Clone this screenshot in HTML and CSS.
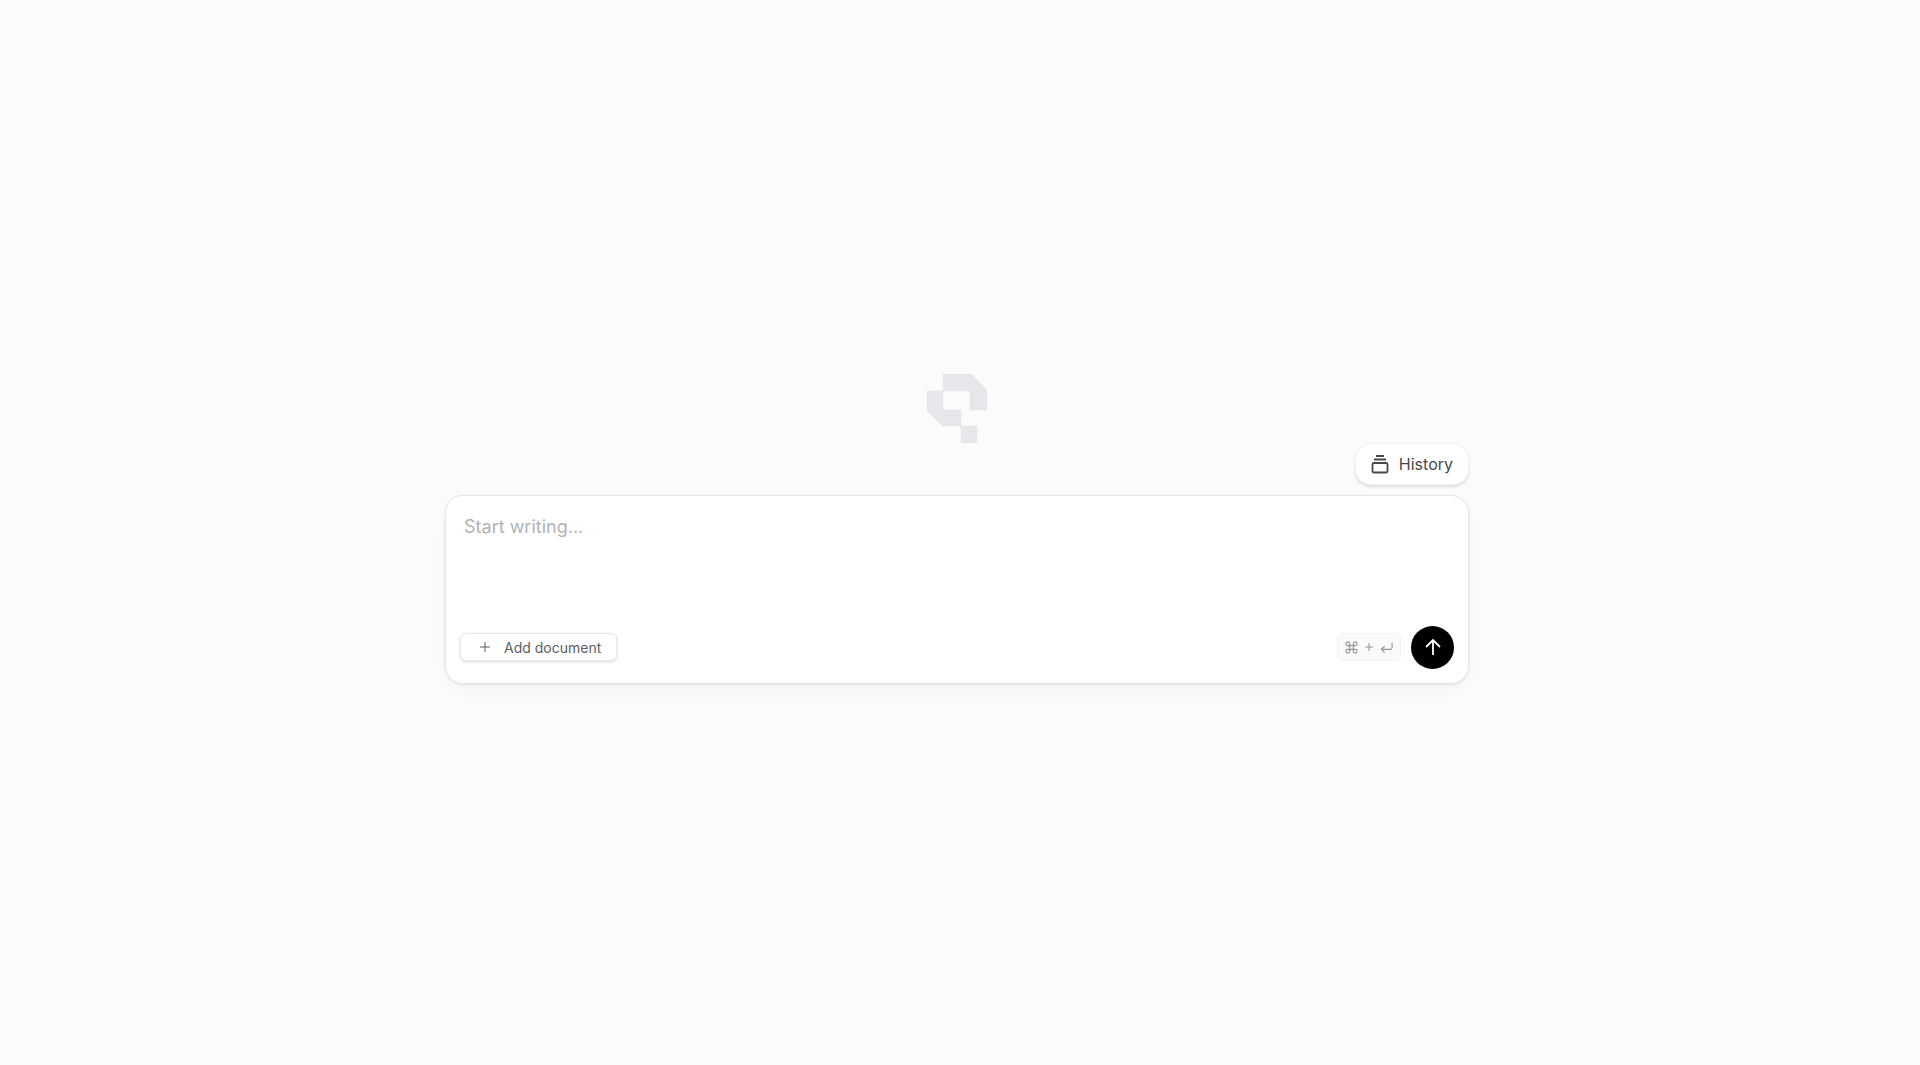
FILE: index.html
```
<!DOCTYPE html>
<html lang="en">
<head>
  <meta charset="UTF-8" />
  <meta name="viewport" content="width=device-width, initial-scale=1" />
  <title>New document</title>
  <link rel="stylesheet" href="styles.css">
</head>
<body>
  <main class="composer">
    <svg class="logo" viewBox="0 0 60 69" aria-hidden="true">
      <path d="M16 0h28l16 16v20H43V17H16z" />
      <path d="M0 17h16v19h18v16H16L0 37z" />
      <path d="M34 52h16v17H34z" />
    </svg>

    <button class="history-btn" type="button">
      <svg class="history-icon" viewBox="0 0 18 20" aria-hidden="true">
        <path d="M5 2h8M3 5.500h12" />
        <rect x="1.500" y="9" width="15" height="9.500" rx="1.500" />
      </svg>
      History
    </button>

    <form class="card">
      <textarea class="prompt" aria-label="Start writing" placeholder="Start writing..."></textarea>
      <div class="toolbar">
        <button class="add-btn" type="button">
          <svg class="plus-icon" viewBox="0 0 10 10" aria-hidden="true">
            <path d="M5 0v10M0 5h10" />
          </svg>
          Add document
        </button>
        <div class="actions">
          <div class="shortcut">
            <svg class="key-icon" viewBox="0 0 14 14" aria-label="Command">
              <path d="M5 5H3a2 2 0 1 1 2-2v8a2 2 0 1 1-2-2h8a2 2 0 1 1-2 2V3a2 2 0 1 1 2 2z" />
            </svg>
            <svg class="key-plus" viewBox="0 0 8 8" aria-label="plus">
              <path d="M4 0v8M0 4h8" />
            </svg>
            <svg class="key-icon" viewBox="0 0 14 14" aria-label="Enter">
              <path d="M13 2v5a2 2 0 0 1-2 2H2M5 5.500L1.500 9 5 12.500" />
            </svg>
          </div>
          <button class="send-btn" type="submit" aria-label="Send">
            <svg class="send-icon" viewBox="0 0 16 16" aria-hidden="true">
              <path d="M8 16V1M1 8l7-7 7 7" />
            </svg>
          </button>
        </div>
      </div>
    </form>
  </main>
</body>
</html>
```
FILE: styles.css
```
* {
  box-sizing: border-box;
}
body {
  margin: 0;
  min-height: 100vh;
  padding: 0 6px 8px 0;
  background: #fbfbfb;
  font-family: Inter, "Liberation Sans", sans-serif;
  display: flex;
  justify-content: center;
  align-items: center;
}
svg {
  display: block;
  fill: none;
  stroke: currentColor;
}
button {
  font-family: inherit;
  cursor: pointer;
}
.composer {
  width: 100%;
  max-width: 1024px;
  display: flex;
  flex-direction: column;
}
.logo {
  width: 60px;
  height: 69px;
  align-self: center;
  fill: #e6e7ea;
  stroke: #dfe0e3;
  stroke-width: 0.5;
}
.history-btn {
  align-self: flex-end;
  display: flex;
  align-items: center;
  gap: 10px;
  height: 42px;
  margin-bottom: 10px;
  padding: 0 15px;
  border: 1px solid #f3f3f3;
  border-radius: 16px;
  background: #fff;
  color: #484848;
  font-size: 16px;
  box-shadow: 0 2px 3px rgba(0, 0, 0, 0.12);
}
.history-icon {
  width: 18px;
  height: 20px;
  stroke-width: 1.8;
}
.card {
  padding: 16px 14px 14px;
  border: 1px solid #e6e6e6;
  border-radius: 18px;
  background: #fff;
  box-shadow: 0 1px 3px rgba(0, 0, 0, 0.08), 0 8px 16px rgba(0, 0, 0, 0.02);
}
.prompt {
  display: block;
  width: 100%;
  height: 114px;
  padding: 3px 4px;
  border: 0;
  outline: 0;
  resize: none;
  background: transparent;
  color: #333;
  font-family: inherit;
  font-size: 18px;
  line-height: 24px;
}
.prompt::placeholder {
  color: #afb3b6;
}
.toolbar {
  display: flex;
  justify-content: space-between;
  align-items: center;
}
.add-btn {
  display: flex;
  align-items: center;
  gap: 14px;
  height: 28px;
  padding: 0 15px 0 19px;
  border: 1px solid #e8e8e8;
  border-radius: 6px;
  background: #fff;
  color: #5e5e5e;
  font-size: 14px;
  box-shadow: 0 1px 3px rgba(0, 0, 0, 0.14);
}
.plus-icon {
  width: 10px;
  height: 10px;
}
.actions {
  display: flex;
  align-items: center;
  gap: 10px;
}
.shortcut {
  display: flex;
  align-items: center;
  gap: 7px;
  height: 28px;
  padding: 0 7px;
  border: 1px solid #f2f2f2;
  border-radius: 6px;
  background: #fafafa;
  color: #949494;
}
.key-icon {
  width: 13px;
  height: 13px;
  stroke-width: 1.2;
}
.key-plus {
  width: 8px;
  height: 8px;
}
.send-btn {
  display: flex;
  align-items: center;
  justify-content: center;
  width: 43px;
  height: 43px;
  padding: 0;
  border: 0;
  border-radius: 50%;
  background: #000;
  color: #fff;
}
.send-icon {
  width: 16px;
  height: 16px;
  stroke-width: 1.8;
}
```
